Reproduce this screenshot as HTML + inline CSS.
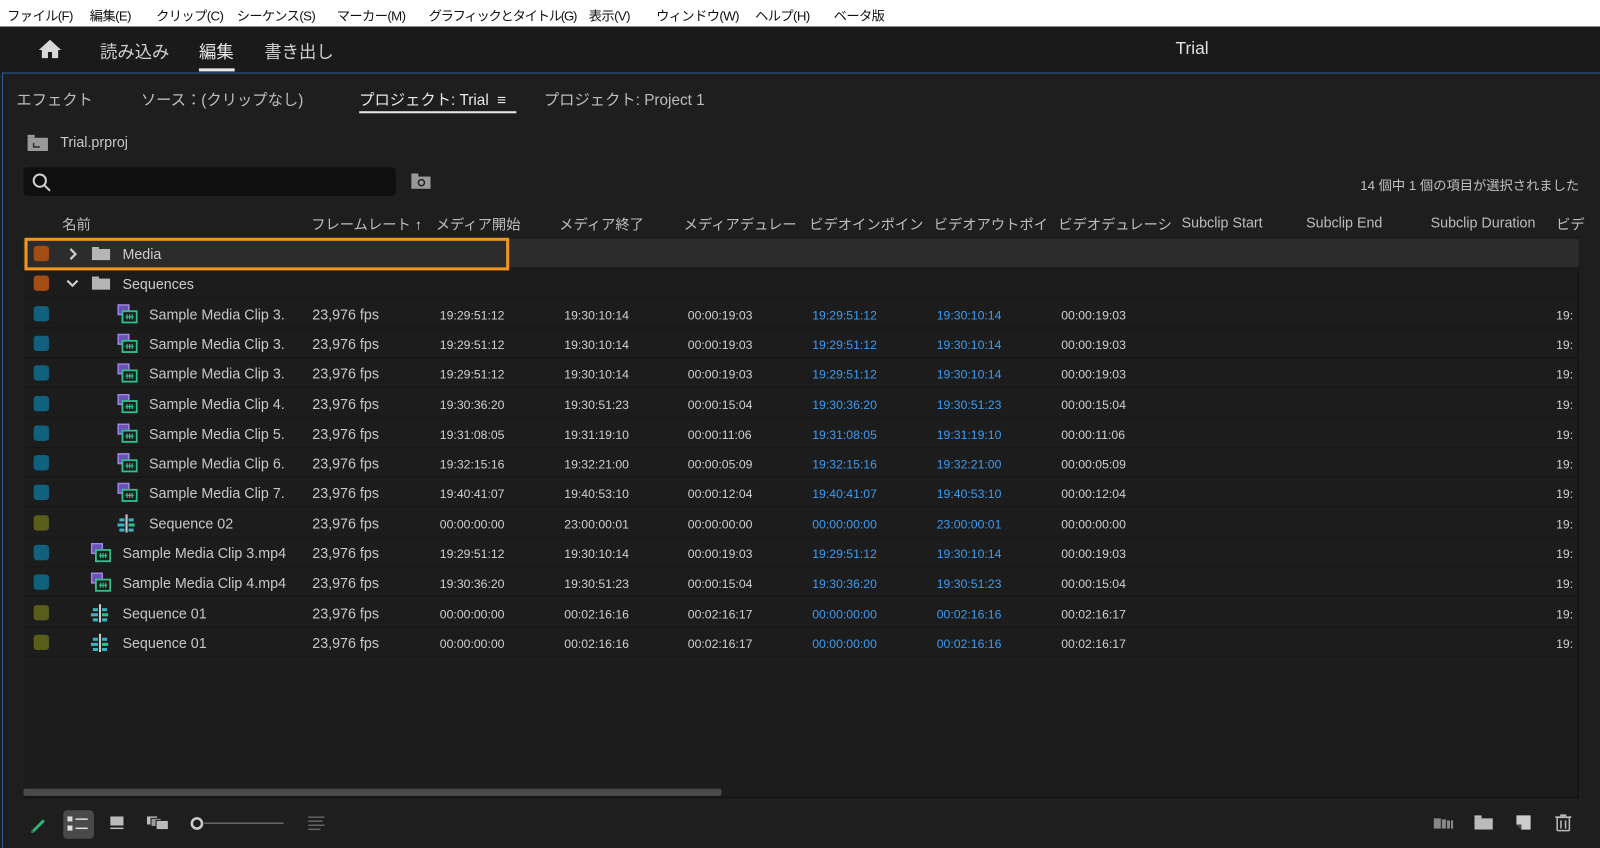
<!DOCTYPE html>
<html><head><meta charset="utf-8"><style>
*{margin:0;padding:0;box-sizing:border-box}
body{width:1600px;height:847px;background:#1d1d1d;font-family:"Liberation Sans","Noto Sans CJK JP",sans-serif;position:relative;overflow:hidden;color:#c8c8c8}
#w{position:absolute;left:0;top:0;width:1568px;height:830px;transform:scale(1.020408);transform-origin:0 0}
.a{position:absolute;white-space:nowrap}
#menu{position:absolute;left:0;top:0;width:1568px;height:26px;background:#fff;color:#111;font-size:13px;letter-spacing:-0.6px}
#menu span{position:absolute;top:5px}
#hdr{position:absolute;left:0;top:26px;width:1568px;height:45px;background:#1a1a1a}
#panel{position:absolute;left:2px;top:71px;width:1566px;height:760px;border:1px solid #2d5f9a;border-right:none;border-bottom:none;background:#1e1e1e}
.row{position:absolute;left:23px;width:1524px;height:29px;border-bottom:1px solid #161616;font-size:14px;color:#c8c8c8}
.row span{position:absolute;top:7px}
.t{font-size:12px!important;top:9px!important;color:#d0d0d0}
.b{color:#3d9cf2!important}
.cb{position:absolute;left:10px;top:7px;width:15px;height:15px;border-radius:3px}
.th{position:absolute;top:210px;font-size:14px;color:#bdbdbd}
</style></head><body><div id="w">
<div id="menu">
<span style="left:7px">ファイル(F)</span><span style="left:88px">編集(E)</span><span style="left:153px">クリップ(C)</span><span style="left:232px">シーケンス(S)</span><span style="left:330px">マーカー(M)</span><span style="left:420px;letter-spacing:-1.2px">グラフィックとタイトル(G)</span><span style="left:577px">表示(V)</span><span style="left:643px">ウィンドウ(W)</span><span style="left:740px">ヘルプ(H)</span><span style="left:817px">ベータ版</span>
</div>
<div id="hdr">
<svg class="a" style="left:37px;top:12px" width="24" height="20" viewBox="0 0 24 20"><path d="M12 1L1 11h3v8h6v-6h4v6h6v-8h3z" fill="#d8d8d8"/></svg>
<span class="a" style="left:98px;top:11px;font-size:17px;color:#cfcfcf">読み込み</span>
<span class="a" style="left:195px;top:11px;font-size:17px;color:#e8e8e8">編集</span>
<div class="a" style="left:195px;top:41px;width:35px;height:3px;background:#e8e8e8"></div>
<span class="a" style="left:259px;top:11px;font-size:17px;color:#cfcfcf">書き出し</span>
<span class="a" style="left:1152px;top:12px;font-size:17px;color:#e0e0e0">Trial</span>
</div>
<div id="panel"></div>
<span class="a" style="left:16px;top:87px;font-size:15px;color:#bdbdbd">エフェクト</span>
<span class="a" style="left:138px;top:87px;font-size:15px;color:#bdbdbd">ソース：(クリップなし)</span>
<span class="a" style="left:352px;top:87px;font-size:15px;color:#e8e8e8">プロジェクト: Trial &nbsp;≡</span>
<div class="a" style="left:352px;top:109px;width:154px;height:2px;background:#e8e8e8"></div>
<span class="a" style="left:533px;top:87px;font-size:15px;color:#bdbdbd">プロジェクト: Project 1</span>
<svg class="a" style="left:27px;top:132px" width="20" height="16"><rect x="0" y="3" width="20" height="13" fill="#9a9a9a"/><rect x="0" y="0" width="7" height="3" fill="#9a9a9a"/><path d="M6 8v4h6" stroke="#333" stroke-width="1.5" fill="none"/></svg>
<span class="a" style="left:59px;top:131px;font-size:14px;color:#c8c8c8">Trial.prproj</span>
<div class="a" style="left:23px;top:164px;width:365px;height:28px;background:#0f0f0f;border-radius:4px"></div>
<svg class="a" style="left:31px;top:169px" width="20" height="20"><circle cx="8" cy="8" r="6" stroke="#d0d0d0" stroke-width="2" fill="none"/><path d="M12.5 12.5L18 18" stroke="#d0d0d0" stroke-width="2"/></svg>
<svg class="a" style="left:403px;top:170px" width="19" height="16"><rect x="0" y="3" width="19" height="12" fill="#9a9a9a"/><rect x="0" y="0" width="7" height="3" fill="#9a9a9a"/><circle cx="10" cy="9" r="3" stroke="#222" stroke-width="1.5" fill="none"/></svg>
<span class="a" style="left:1333px;top:171px;font-size:13px;color:#c0c0c0">14 個中 1 個の項目が選択されました</span>
<span class="th" style="left:61px">名前</span>
<span class="th" style="left:305px">フレームレート <b style="color:#ddd">↑</b></span>
<span class="th" style="left:427px">メディア開始</span>
<span class="th" style="left:548px">メディア終了</span>
<span class="th" style="left:670px">メディアデュレー</span>
<span class="th" style="left:793px">ビデオインポイン</span>
<span class="th" style="left:915px">ビデオアウトポイ</span>
<span class="th" style="left:1037px">ビデオデュレーシ</span>
<span class="th" style="left:1158px">Subclip Start</span>
<span class="th" style="left:1280px">Subclip End</span>
<span class="th" style="left:1402px">Subclip Duration</span>
<span class="th" style="left:1525px">ビデ</span>
<div class="a" style="left:23px;top:232px;width:1524px;height:550px;background:#1c1c1c;border-right:1px solid #111;border-bottom:1px solid #111"></div>
<div id="rows"></div>
<div class="a" style="left:23px;top:773px;width:684px;height:7px;background:#4a4a4a;border-radius:2px"></div>
<div class="a" style="left:24px;top:233px;width:475px;height:32px;border:3px solid #f0961e"></div>
<svg class="a" style="left:27px;top:798px" width="20" height="20"><path d="M4 16L15 5l2 2L6 18H3z" fill="#2db87a"/><path d="M3 18l1-3 2 2z" fill="#1a6a48"/></svg>
<div class="a" style="left:62px;top:794px;width:30px;height:28px;background:#4a4a4a;border-radius:4px"></div>
<svg class="a" style="left:66px;top:800px" width="22" height="16"><rect x="0" y="0" width="5" height="5" fill="#ddd"/><rect x="0" y="9" width="5" height="5" fill="#ddd"/><rect x="8" y="2" width="12" height="1.5" fill="#ddd"/><rect x="8" y="11" width="12" height="1.5" fill="#ddd"/></svg>
<svg class="a" style="left:108px;top:800px" width="14" height="14"><rect x="0" y="0" width="13" height="9" fill="#bbb"/><rect x="0" y="11" width="13" height="1.5" fill="#bbb"/></svg>
<svg class="a" style="left:144px;top:800px" width="24" height="14"><rect x="0" y="0" width="10" height="8" fill="#bbb"/><rect x="4" y="2" width="10" height="8" fill="#999" stroke="#1e1e1e"/><rect x="9" y="4" width="12" height="9" fill="#bbb" stroke="#1e1e1e"/></svg>
<svg class="a" style="left:186px;top:800px" width="95" height="14"><circle cx="7" cy="7" r="5" stroke="#ccc" stroke-width="2.5" fill="none"/><rect x="14" y="6" width="78" height="1.5" fill="#666"/></svg>
<svg class="a" style="left:302px;top:800px" width="16" height="14"><rect x="0" y="0" width="16" height="1.5" fill="#666"/><rect x="0" y="4" width="14" height="1.5" fill="#666"/><rect x="0" y="8" width="16" height="1.5" fill="#666"/><rect x="0" y="12" width="12" height="1.5" fill="#666"/></svg>
<svg class="a" style="left:1405px;top:801px" width="20" height="12"><rect x="0" y="1" width="7" height="10" fill="#888"/><rect x="8" y="2" width="4" height="9" fill="#888"/><rect x="13" y="3" width="3" height="8" fill="#888"/><rect x="17" y="3" width="2" height="8" fill="#888"/></svg>
<svg class="a" style="left:1445px;top:799px" width="18" height="14"><rect x="0" y="3" width="18" height="11" fill="#bbb"/><rect x="0" y="0" width="7" height="3" fill="#bbb"/></svg>
<svg class="a" style="left:1486px;top:799px" width="15" height="15"><path d="M0 0h14v14H5L0 9z" fill="#ccc"/><path d="M0 9h5v5" fill="#444"/></svg>
<svg class="a" style="left:1524px;top:798px" width="16" height="17"><rect x="2" y="3" width="12" height="13" rx="1" fill="none" stroke="#bbb" stroke-width="1.5"/><rect x="0" y="2" width="16" height="1.5" fill="#bbb"/><rect x="5" y="0" width="6" height="2" fill="#bbb"/><rect x="5" y="6" width="1.5" height="8" fill="#bbb"/><rect x="9.5" y="6" width="1.5" height="8" fill="#bbb"/></svg>
</div>
<script>
var clip='<svg style="position:absolute;top:5px;left:LPX" width="20" height="20"><rect x="0" y="0" width="12" height="11" fill="#9f85e6"/><rect x="1.5" y="1.5" width="9" height="8" fill="#6a52b8"/><rect x="5" y="7" width="14" height="11" fill="#1c1c1c" stroke="#2dc08a" stroke-width="1.8"/><path d="M8 12.5h8M9.5 10v5M12 10v5M14.5 10v5" stroke="#2dc08a" stroke-width="1.2"/></svg>';
var seq='<svg style="position:absolute;top:6px;left:LPX" width="18" height="18"><rect x="8" y="0" width="2" height="18" fill="#ccc"/><rect x="2" y="4" width="5" height="3" fill="#3fb0c0"/><rect x="0" y="9" width="7" height="3" fill="#3fb0c0"/><rect x="2" y="14" width="5" height="3" fill="#3fb0c0"/><rect x="11" y="4" width="5" height="3" fill="#3fb0c0"/><rect x="11" y="9" width="6" height="3" fill="#2dc08a"/><rect x="11" y="14" width="5" height="3" fill="#3fb0c0"/></svg>';
var fold='<svg style="position:absolute;top:8px;left:67px" width="18" height="13"><rect x="0" y="2" width="18" height="11" fill="#b5b5b5"/><rect x="0" y="0" width="7" height="2" fill="#b5b5b5"/></svg>';
var chevR='<svg style="position:absolute;top:9px;left:44px" width="10" height="12"><path d="M2 1l5 5-5 5" stroke="#ccc" stroke-width="2.2" fill="none"/></svg>';
var chevD='<svg style="position:absolute;top:10px;left:42px" width="12" height="10"><path d="M1 2l5 5 5-5" stroke="#ccc" stroke-width="2.2" fill="none"/></svg>';
var R=[
['f','Media','>'],['f','Sequences','v'],
['c1','Sample Media Clip 3.','19:29:51:12','19:30:10:14','00:00:19:03'],
['c1','Sample Media Clip 3.','19:29:51:12','19:30:10:14','00:00:19:03'],
['c1','Sample Media Clip 3.','19:29:51:12','19:30:10:14','00:00:19:03'],
['c1','Sample Media Clip 4.','19:30:36:20','19:30:51:23','00:00:15:04'],
['c1','Sample Media Clip 5.','19:31:08:05','19:31:19:10','00:00:11:06'],
['c1','Sample Media Clip 6.','19:32:15:16','19:32:21:00','00:00:05:09'],
['c1','Sample Media Clip 7.','19:40:41:07','19:40:53:10','00:00:12:04'],
['s1','Sequence 02','00:00:00:00','23:00:00:01','00:00:00:00'],
['c0','Sample Media Clip 3.mp4','19:29:51:12','19:30:10:14','00:00:19:03'],
['c0','Sample Media Clip 4.mp4','19:30:36:20','19:30:51:23','00:00:15:04'],
['s0','Sequence 01','00:00:00:00','00:02:16:16','00:02:16:17'],
['s0','Sequence 01','00:00:00:00','00:02:16:16','00:02:16:17']];
var h='';
R.forEach(function(r,i){
var top=234+i*29.3;var k=r[0];
var col=k=='f'?'#a34c14':(k[0]=='s'?'#5a5c1a':'#11607d');
var bg=i==0?'#2c2c2c':'transparent';
h+='<div class="row" style="top:'+top+'px;background:'+bg+'"><div class="cb" style="background:'+col+'"></div>';
if(k=='f'){
h+=(r[2]=='>'?chevR:chevD)+fold+'<span style="left:97px;color:#ccc">'+r[1]+'</span>';
}else{
var ind=k[1]=='1'?92:66;
h+=(k[0]=='c'?clip:seq).replace('LPX',ind)+'<span style="left:'+(ind+31)+'px">'+r[1]+'</span>';
h+='<span style="left:283px">23,976 fps</span>';
h+='<span class="t" style="left:408px">'+r[2]+'</span><span class="t" style="left:530px">'+r[3]+'</span><span class="t" style="left:651px">'+r[4]+'</span>';
h+='<span class="t b" style="left:773px">'+r[2]+'</span><span class="t b" style="left:895px">'+r[3]+'</span><span class="t" style="left:1017px">'+r[4]+'</span>';
h+='<span class="t" style="left:1502px">19:</span>';
}
h+='</div>';});
document.getElementById('rows').innerHTML=h;
</script>
</body></html>
